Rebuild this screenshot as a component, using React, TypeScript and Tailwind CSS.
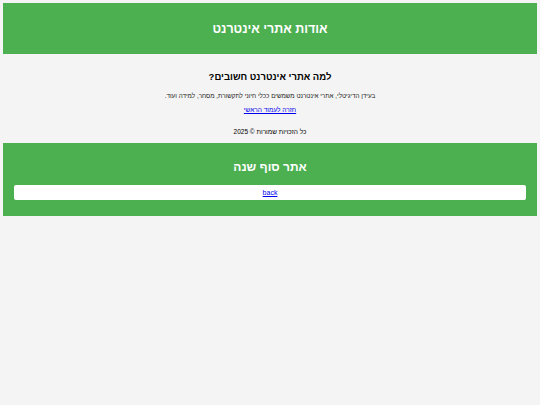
export default function App() {
  return (
    <div
      dir="rtl"
      className="min-h-[405px] bg-[#f4f4f4] p-[3px] text-center text-[#222]"
      style={{ fontFamily: '"Liberation Sans", Arial, sans-serif' }}
    >
      {/* כותרת עליונה */}
      <header className="flex h-[51px] items-center justify-center bg-[#4caf50] pt-[1px]">
        <h1 className="text-[12.5px] font-bold text-white">אודות אתרי אינטרנט</h1>
      </header>

      <main className="pt-[16px]">
        <h2 className="text-[9.5px] font-bold leading-[14px] text-black">למה אתרי אינטרנט חשובים?</h2>
        <p className="mt-[8px] text-[6.3px] leading-[8px]">
          בעידן הדיגיטלי, אתרי אינטרנט משמשים ככלי חיוני לתקשורת, מסחר, למידה ועוד.
        </p>
        <a href="#" className="mt-[6px] block text-[6.5px] leading-[8px] text-[#0000ee] underline">
          חזרה לעמוד הראשי
        </a>
        <p className="mt-[14px] text-[6.5px] leading-[8px] text-black">כל הזכויות שמורות © 2025</p>
      </main>

      <section className="mt-[7px] bg-[#4caf50] px-[11px] pb-[16px] pt-[15px]">
        <h1 className="text-[12px] font-bold leading-[18px] text-white">אתר סוף שנה</h1>
        <div className="mt-[9px] flex h-[15px] items-center justify-center rounded-[2px] bg-white">
          <a href="#" dir="ltr" className="text-[7px] leading-[8px] text-[#0000ee] underline">
            back
          </a>
        </div>
      </section>
    </div>
  );
}
